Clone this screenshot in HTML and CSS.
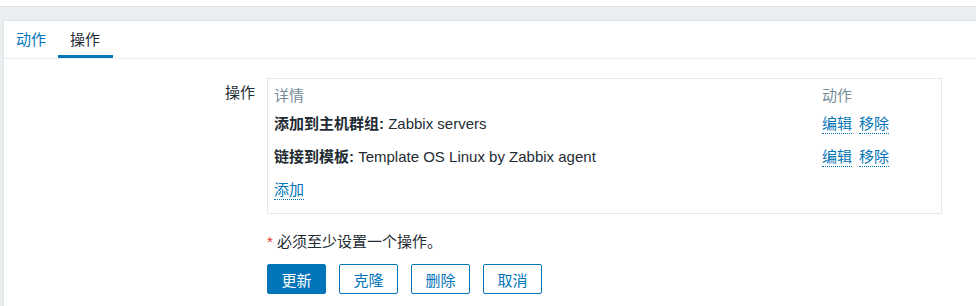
FILE: index.html
```html
<!DOCTYPE html>
<html lang="zh-CN">
<head>
<meta charset="utf-8">
<title>操作</title>
<link rel="stylesheet" href="styles.css">
</head>
<body>
<div class="top"></div>
<div class="page">
  <div class="panel">
    <ul class="tabs">
      <li class="tab"><a href="#">动作</a></li>
      <li class="tab active"><a href="#">操作</a></li>
    </ul>
    <div class="form">
      <div class="row">
        <label class="label">操作</label>
        <div class="box">
          <table class="ops">
            <thead>
              <tr><th class="c-detail">详情</th><th class="c-action">动作</th></tr>
            </thead>
            <tbody>
              <tr>
                <td><b>添加到主机群组:</b> Zabbix servers</td>
                <td class="c-action"><a class="link" href="#">编辑</a><a class="link" href="#">移除</a></td>
              </tr>
              <tr>
                <td><b>链接到模板:</b> Template OS Linux by Zabbix agent</td>
                <td class="c-action"><a class="link" href="#">编辑</a><a class="link" href="#">移除</a></td>
              </tr>
              <tr>
                <td><a class="link" href="#">添加</a></td>
                <td></td>
              </tr>
            </tbody>
          </table>
        </div>
      </div>
      <div class="note"><span class="req">*</span> 必须至少设置一个操作。</div>
      <div class="buttons">
        <button class="btn primary">更新</button>
        <button class="btn">克隆</button>
        <button class="btn">删除</button>
        <button class="btn">取消</button>
      </div>
    </div>
  </div>
</div>
</body>
</html>
```
FILE: styles.css
```css
* { box-sizing: border-box; }
html, body { margin: 0; padding: 0; }
body {
  background: #ffffff;
  font-family: "Liberation Sans", "Noto Sans CJK SC", sans-serif;
  font-size: 15px;
  color: #1f2c33;
  width: 976px;
  height: 306px;
  overflow: hidden;
}
.top { height: 6px; background: #ffffff; }
.page {
  background: #ebeef0;
  border-top: 1px solid #dfe4e7;
  padding: 13px 0 0 3px;
  height: 300px;
}
.panel {
  background: #ffffff;
  border-top: 1px solid #dfe4e7;
  border-left: 1px solid #dfe4e7;
  height: 100%;
}
.tabs {
  list-style: none;
  margin: 0;
  padding: 0;
  display: flex;
  height: 38px;
  border-bottom: 1px solid #ebeef0;
}
.tab { height: 37px; }
.tab a {
  display: block;
  height: 37px;
  line-height: 38px;
  padding: 0 12px;
  color: #0275b8;
  text-decoration: none;
  border-bottom: 3px solid transparent;
}
.tab.active a {
  color: #1f2c33;
  border-bottom-color: #0275b8;
  padding-right: 13px;
}
.form { padding: 19px 0 0 0; }
.row { display: flex; }
.label {
  width: 251px;
  text-align: right;
  padding-top: 5px;
  line-height: 20px;
  margin-right: 12px;
}
.box {
  width: 675px;
  border: 1px solid #e5e8ea;
  padding: 4px 6px 8px 6px;
}
.ops { border-collapse: collapse; width: 100%; }
.ops th {
  font-weight: normal;
  color: #768d99;
  text-align: left;
  height: 23px;
  padding: 0;
  vertical-align: middle;
}
.ops td {
  height: 33px;
  padding: 0;
  vertical-align: middle;
}
.c-detail { width: 548px; }
.ops b { font-weight: bold; }
.link {
  color: #0275b8;
  text-decoration: none;
  border-bottom: 1px dotted #0275b8;
  padding-bottom: 1px;
}
.c-action .link + .link { margin-left: 7px; }
.note {
  margin: 18px 0 0 263px;
  line-height: 20px;
}
.req { color: #e33734; }
.buttons {
  display: flex;
  gap: 13px;
  margin: 12px 0 0 263px;
}
.btn {
  width: 59px;
  height: 30px;
  border: 1px solid #0275b8;
  border-radius: 2px;
  background: #ffffff;
  color: #0275b8;
  font-family: "Liberation Sans", "Noto Sans CJK SC", sans-serif;
  font-size: 15px;
  padding: 0;
}
.btn.primary { background: #0275b8; color: #ffffff; }
```
